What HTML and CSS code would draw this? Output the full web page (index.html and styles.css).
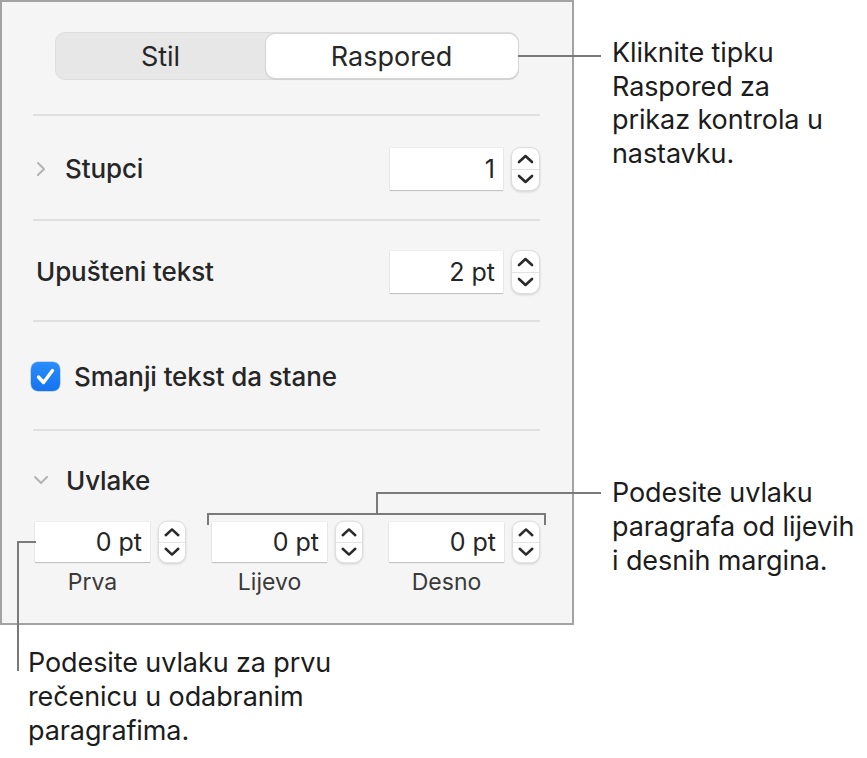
FILE: index.html
```html
<!DOCTYPE html>
<html lang="hr">
<head>
<meta charset="utf-8">
<title>Raspored</title>
<link rel="stylesheet" href="styles.css">
</head>
<body>
<div class="canvas">
  <div class="panel">
    <div class="segmented">
      <div class="seg">Stil</div>
      <div class="seg seg-on">Raspored</div>
    </div>

    <div class="section s1">
      <svg class="chev" width="14" height="16" viewBox="0 0 14 16"><path d="M4 2 L10 8 L4 14" fill="none" stroke="#b3b3b3" stroke-width="2" stroke-linecap="round" stroke-linejoin="round"/></svg>
      <span class="label bold">Stupci</span>
      <div class="field">
        <div class="input">1</div>
        <svg class="stepper" width="29" height="44" viewBox="0 0 29 44"><rect x="0.5" y="0.5" width="28" height="43" rx="9" fill="#fff" stroke="#dcdcdc"/><line x1="1" y1="22.5" x2="28" y2="22.5" stroke="#e2e2e2"/><path d="M8 15 L14.5 9 L21 15" fill="none" stroke="#2a2a2a" stroke-width="2.6" stroke-linecap="round" stroke-linejoin="round"/><path d="M8 29 L14.5 35 L21 29" fill="none" stroke="#2a2a2a" stroke-width="2.6" stroke-linecap="round" stroke-linejoin="round"/></svg>
      </div>
    </div>

    <div class="section s2">
      <span class="label plain">Upušteni tekst</span>
      <div class="field">
        <div class="input">2 pt</div>
        <svg class="stepper" width="29" height="44" viewBox="0 0 29 44"><rect x="0.5" y="0.5" width="28" height="43" rx="9" fill="#fff" stroke="#dcdcdc"/><line x1="1" y1="22.5" x2="28" y2="22.5" stroke="#e2e2e2"/><path d="M8 15 L14.5 9 L21 15" fill="none" stroke="#2a2a2a" stroke-width="2.6" stroke-linecap="round" stroke-linejoin="round"/><path d="M8 29 L14.5 35 L21 29" fill="none" stroke="#2a2a2a" stroke-width="2.6" stroke-linecap="round" stroke-linejoin="round"/></svg>
      </div>
    </div>

    <div class="section s3">
      <span class="checkbox"><svg width="29" height="29" viewBox="0 0 29 29"><path d="M7.5 15 L12.5 20.5 L21.5 8.5" fill="none" stroke="#fff" stroke-width="3.4" stroke-linecap="round" stroke-linejoin="round"/></svg></span>
      <span class="label check-label">Smanji tekst da stane</span>
    </div>

    <div class="section s4">
      <div class="head">
        <svg class="chev-down" width="16" height="14" viewBox="0 0 16 14"><path d="M2 4 L8 10 L14 4" fill="none" stroke="#b3b3b3" stroke-width="2" stroke-linecap="round" stroke-linejoin="round"/></svg>
        <span class="label bold">Uvlake</span>
      </div>
      <div class="indents">
        <div class="group">
          <div class="field small">
            <div class="input">0 pt</div>
            <svg class="stepper" width="29" height="44" viewBox="0 0 29 44"><rect x="0.5" y="0.5" width="28" height="43" rx="9" fill="#fff" stroke="#dcdcdc"/><line x1="1" y1="22.5" x2="28" y2="22.5" stroke="#e2e2e2"/><path d="M8 15 L14.5 9 L21 15" fill="none" stroke="#2a2a2a" stroke-width="2.6" stroke-linecap="round" stroke-linejoin="round"/><path d="M8 29 L14.5 35 L21 29" fill="none" stroke="#2a2a2a" stroke-width="2.6" stroke-linecap="round" stroke-linejoin="round"/></svg>
          </div>
          <div class="cap">Prva</div>
        </div>
        <div class="group">
          <div class="field small">
            <div class="input">0 pt</div>
            <svg class="stepper" width="29" height="44" viewBox="0 0 29 44"><rect x="0.5" y="0.5" width="28" height="43" rx="9" fill="#fff" stroke="#dcdcdc"/><line x1="1" y1="22.5" x2="28" y2="22.5" stroke="#e2e2e2"/><path d="M8 15 L14.5 9 L21 15" fill="none" stroke="#2a2a2a" stroke-width="2.6" stroke-linecap="round" stroke-linejoin="round"/><path d="M8 29 L14.5 35 L21 29" fill="none" stroke="#2a2a2a" stroke-width="2.6" stroke-linecap="round" stroke-linejoin="round"/></svg>
          </div>
          <div class="cap">Lijevo</div>
        </div>
        <div class="group">
          <div class="field small">
            <div class="input">0 pt</div>
            <svg class="stepper" width="29" height="44" viewBox="0 0 29 44"><rect x="0.5" y="0.5" width="28" height="43" rx="9" fill="#fff" stroke="#dcdcdc"/><line x1="1" y1="22.5" x2="28" y2="22.5" stroke="#e2e2e2"/><path d="M8 15 L14.5 9 L21 15" fill="none" stroke="#2a2a2a" stroke-width="2.6" stroke-linecap="round" stroke-linejoin="round"/><path d="M8 29 L14.5 35 L21 29" fill="none" stroke="#2a2a2a" stroke-width="2.6" stroke-linecap="round" stroke-linejoin="round"/></svg>
          </div>
          <div class="cap">Desno</div>
        </div>
      </div>
    </div>
  </div>

  <svg class="leaders" width="867" height="758" viewBox="0 0 867 758">
    <g fill="none" stroke="#7a7a7a" stroke-width="2">
      <path d="M518 56 H601"/>
      <path d="M208 525 V514 H545 V525"/>
      <path d="M377 514 V493 H601"/>
      <path d="M36 542 H18 V671"/>
    </g>
  </svg>

  <p class="note n1">Kliknite tipku<br>Raspored za<br>prikaz kontrola u<br>nastavku.</p>
  <p class="note n2">Podesite uvlaku<br>paragrafa od lijevih<br>i desnih margina.</p>
  <p class="note n3">Podesite uvlaku za prvu<br>rečenicu u odabranim<br>paragrafima.</p>
</div>
</body>
</html>
```

FILE: styles.css
```css
* { box-sizing: border-box; }

html, body {
  margin: 0;
  padding: 0;
  background: #ffffff;
}

body {
  font-family: "Inter", "Roboto", "Liberation Sans", sans-serif;
  color: #262626;
}

.canvas {
  position: relative;
  width: 867px;
  height: 758px;
  overflow: hidden;
}

.panel {
  width: 574px;
  height: 625px;
  background: #f5f5f5;
  border: 2px solid #a3a3a3;
  padding: 30px 32px 0 31px;
  display: flex;
  flex-direction: column;
}

/* segmented control */
.segmented {
  width: 464px;
  height: 48px;
  margin: 0 auto 34px;
  background: #e7e7e7;
  border: 1px solid #dddddd;
  border-radius: 10px;
  display: flex;
  padding: 1px 0 1px 0;
}

.seg {
  flex: 1;
  display: flex;
  align-items: center;
  justify-content: center;
  font-size: 27px;
  color: #262626;
}

.seg-on {
  flex: 0 0 252px;
  background: #ffffff;
  border-radius: 9px;
  box-shadow: 0 0 0 1px #d6d6d6, 0 1px 2px rgba(0, 0, 0, 0.2);
}

/* sections */
.section {
  border-top: 2px solid #e0e0e0;
  display: flex;
  align-items: center;
}

.s1 { height: 105px; padding-top: 2px; }
.s2 { height: 101px; padding-top: 2px; }
.s3 { height: 109px; padding-top: 2px; }
.s4 {
  flex: 1;
  flex-direction: column;
  align-items: stretch;
}

.label {
  font-size: 26px;
  color: #262626;
  letter-spacing: -0.1px;
}

.bold { font-weight: 500; }

.plain {
  font-weight: 500;
  margin-left: 3px;
}

.chev {
  margin-left: 1px;
  margin-right: 17px;
}

.field {
  margin-left: auto;
  display: flex;
  align-items: center;
  gap: 8px;
}

.input {
  width: 113px;
  height: 42px;
  background: #ffffff;
  box-shadow: 0 1px 1px rgba(0, 0, 0, 0.18), 0 0 0 0.5px rgba(0, 0, 0, 0.06);
  font-size: 25px;
  color: #262626;
  text-align: right;
  padding-right: 8px;
  line-height: 42px;
}

.stepper {
  display: block;
  filter: drop-shadow(0 1px 1px rgba(0, 0, 0, 0.15));
}

/* checkbox */
.checkbox {
  width: 29px;
  height: 29px;
  margin-left: -2px;
  margin-right: 14px;
  border-radius: 7px;
  background: linear-gradient(#2b8cfb, #1474f2);
  display: flex;
  box-shadow: 0 0 0 0.5px rgba(0, 60, 160, 0.35);
}

.check-label { font-weight: 500; }

/* indents */
.head {
  display: flex;
  align-items: center;
  height: 26px;
  margin-top: 36px;
}

.chev-down {
  margin-left: 0;
  margin-right: 17px;
}

.indents {
  display: flex;
  justify-content: space-between;
  margin-top: 29px;
  padding-left: 2px;
}

.group {
  display: flex;
  flex-direction: column;
}

.field.small {
  margin-left: 0;
  height: 40px;
}

.field.small .input {
  width: 115px;
  height: 40px;
  line-height: 40px;
}

.field.small .stepper {
  width: 28px;
}

.cap {
  width: 115px;
  text-align: center;
  font-size: 23px;
  line-height: 26px;
  margin-top: 7px;
  color: #3a3a3a;
}

/* annotations */
.leaders {
  position: absolute;
  left: 0;
  top: 0;
  pointer-events: none;
}

.note {
  position: absolute;
  margin: 0;
  font-size: 27px;
  line-height: 34px;
  color: #1c1c1c;
  letter-spacing: -0.1px;
}

.n1 { left: 612px; top: 36px; line-height: 33.5px; }
.n2 { left: 612px; top: 476px; }
.n3 { left: 28px; top: 646px; }
```
